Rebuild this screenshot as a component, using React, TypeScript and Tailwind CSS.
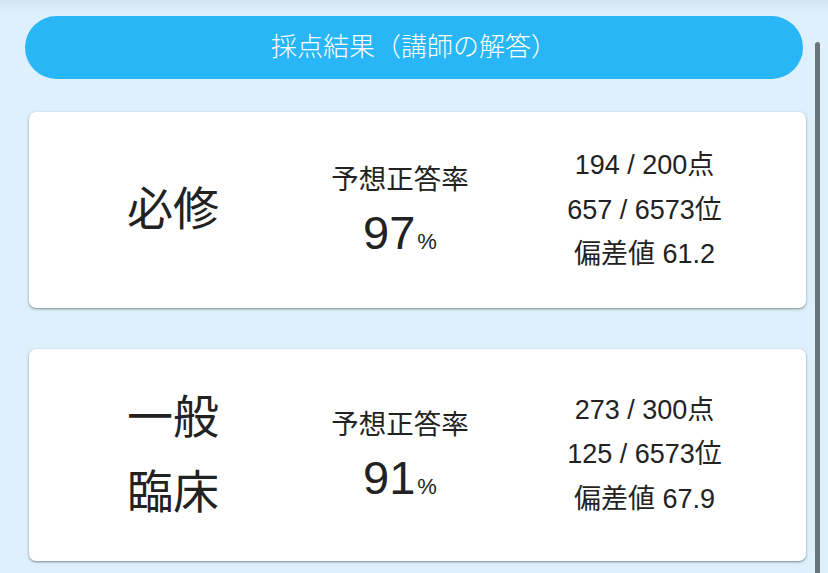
import React from "react";

const font = { fontFamily: '"Liberation Sans", "Noto Sans CJK JP", sans-serif' };

function Card({
  title,
  rate,
  lines,
  mt,
}: {
  title: string[];
  rate: string;
  lines: string[];
  mt: string;
}) {
  return (
    <div
      className={`${mt} ml-[29px] w-[777px] rounded-[7px] bg-white py-[31px] shadow-[0_1px_2px_rgba(0,0,0,0.35),0_1px_4px_rgba(0,0,0,0.12)] grid grid-cols-[288px_166px_1fr] items-center text-[#222]`}
    >
      <div className="flex flex-col items-center text-[46px] leading-[75px]">
        {title.map((t) => (
          <div key={t}>{t}</div>
        ))}
      </div>
      <div className="flex flex-col items-center pt-[16px]">
        <div className="text-[27.5px] leading-[34px]">予想正答率</div>
        <div className="mt-[6px] flex items-baseline leading-[60px]">
          <span className="text-[47px]">{rate}</span>
          <span className="ml-[2px] text-[22px]">%</span>
        </div>
      </div>
      <div className="flex flex-col items-center text-[27px] leading-[44.5px]">
        {lines.map((l) => (
          <div key={l}>{l}</div>
        ))}
      </div>
    </div>
  );
}

export default function App() {
  return (
    <div
      className="relative h-[573px] w-[828px] overflow-hidden bg-[#ddf0fb]"
      style={font}
    >
      <div className="absolute left-0 top-0 h-[12px] w-full bg-gradient-to-b from-[#d3e6f1] to-[#ddf0fb]" />
      <div className="relative pt-[16px]">
        <div className="ml-[25px] flex h-[63px] w-[778px] items-center justify-center rounded-full bg-[#29b6f6] text-[26px] font-light text-white">
          採点結果（講師の解答）
        </div>
        <Card
          mt="mt-[33px]"
          title={["必修"]}
          rate="97"
          lines={["194 / 200点", "657 / 6573位", "偏差値 61.2"]}
        />
        <Card
          mt="mt-[41px]"
          title={["一般", "臨床"]}
          rate="91"
          lines={["273 / 300点", "125 / 6573位", "偏差値 67.9"]}
        />
      </div>
      <div className="absolute left-[815px] top-[42px] h-[540px] w-[5px] rounded-t-full bg-[#6b7479]" />
    </div>
  );
}
